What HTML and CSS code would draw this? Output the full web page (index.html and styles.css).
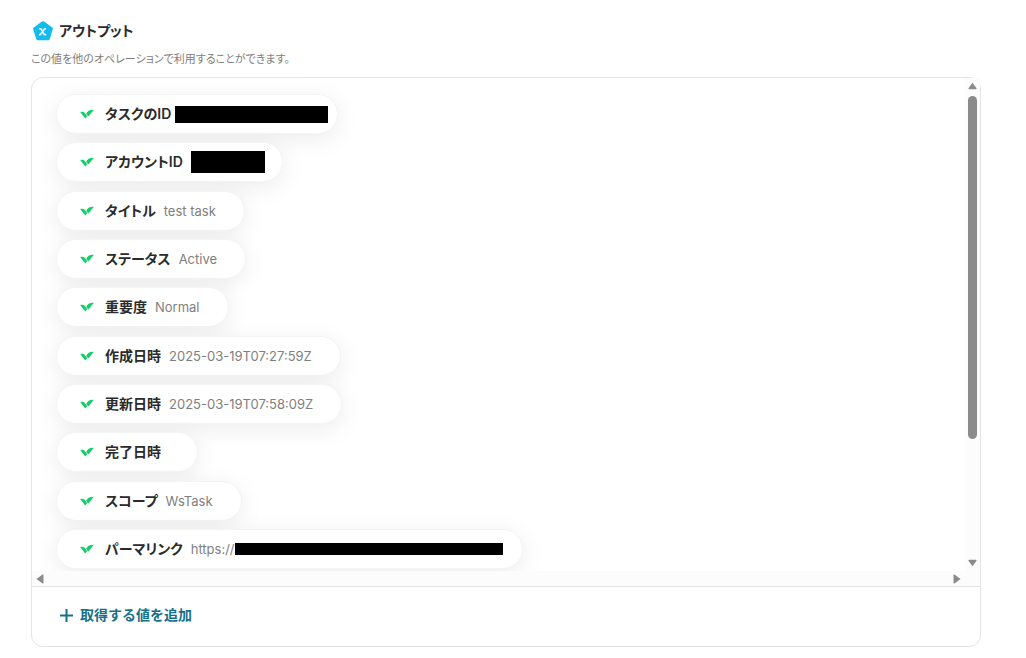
FILE: index.html
```html
<!DOCTYPE html>
<html lang="ja">
<head>
<meta charset="utf-8">
<meta name="viewport" content="width=device-width, initial-scale=1">
<title>アウトプット</title>
<link rel="stylesheet" href="styles.css">
</head>
<body>
<svg class="defs" aria-hidden="true">
  <symbol id="check" viewBox="0 0 14 10">
    <path d="M0.2 3.1C1.8 2.5 3.8 2.7 4.8 3.9L7.2 7.2L5.3 9.5Z"/>
    <path d="M6.2 5C7.2 2.2 9.8 0.6 13.8 0.8L8.9 7C8.4 7.6 7 6.2 6.2 5Z"/>
  </symbol>
</svg>
<main class="page">
  <header class="head">
    <svg class="logo" viewBox="0 0 20 20" aria-hidden="true">
      <path d="M8.9 0.6Q10 -0.1 11.1 0.6L19.2 6.4Q20.2 7.1 19.8 8.3L16.8 18Q16.4 19.2 15.1 19.2H4.9Q3.6 19.2 3.2 18L0.2 8.3Q-0.2 7.1 0.8 6.4Z" fill="#13bbee"/>
      <path d="M6.2 7.8H7.3Q8 7.8 8.5 8.6L10.6 12.6Q11.1 13.6 11.8 13.6H13.1M13.1 7.8H12.3Q11.7 7.8 11.1 8.6L7.9 12.8Q7.4 13.6 6.8 13.6H6" fill="none" stroke="#fff" stroke-width="1.6"/>
    </svg>
    <h1 class="title">アウトプット</h1>
  </header>
  <p class="lead">この値を他のオペレーションで利用することができます。</p>
  <section class="card">
    <div class="scroller">
      <ul class="list">
        <li class="chip"><svg class="check" aria-hidden="true"><use href="#check"/></svg><span class="label">タスクのID</span><span class="mask mask-id"></span></li>
        <li class="chip"><svg class="check" aria-hidden="true"><use href="#check"/></svg><span class="label">アカウントID</span><span class="mask mask-account"></span></li>
        <li class="chip"><svg class="check" aria-hidden="true"><use href="#check"/></svg><span class="label">タイトル</span><span class="value">test task</span></li>
        <li class="chip"><svg class="check" aria-hidden="true"><use href="#check"/></svg><span class="label">ステータス</span><span class="value">Active</span></li>
        <li class="chip"><svg class="check" aria-hidden="true"><use href="#check"/></svg><span class="label">重要度</span><span class="value">Normal</span></li>
        <li class="chip"><svg class="check" aria-hidden="true"><use href="#check"/></svg><span class="label">作成日時</span><span class="value">2025-03-19T07:27:59Z</span></li>
        <li class="chip"><svg class="check" aria-hidden="true"><use href="#check"/></svg><span class="label">更新日時</span><span class="value">2025-03-19T07:58:09Z</span></li>
        <li class="chip"><svg class="check" aria-hidden="true"><use href="#check"/></svg><span class="label">完了日時</span><span class="value"></span></li>
        <li class="chip"><svg class="check" aria-hidden="true"><use href="#check"/></svg><span class="label">スコープ</span><span class="value">WsTask</span></li>
        <li class="chip"><svg class="check" aria-hidden="true"><use href="#check"/></svg><span class="label">パーマリンク</span><span class="value link">https://<span class="mask mask-link"></span></span></li>
      </ul>
      <div class="track-y">
        <svg class="arrow" viewBox="0 0 10 8" aria-hidden="true"><path d="M5 0.5L9.5 6.5Q9.6 7.5 8.8 7.5H1.2Q0.4 7.5 0.5 6.5Z"/></svg>
        <div class="rail"><div class="thumb"></div></div>
        <svg class="arrow" viewBox="0 0 10 8" aria-hidden="true"><path d="M5 7.5L9.5 1.5Q9.6 0.5 8.8 0.5H1.2Q0.4 0.5 0.5 1.5Z"/></svg>
      </div>
      <div class="track-x">
        <svg class="arrow-side" viewBox="0 0 8 10" aria-hidden="true"><path d="M0.5 5L6.5 0.5Q7.5 0.4 7.5 1.2V8.8Q7.5 9.6 6.5 9.5Z"/></svg>
        <svg class="arrow-side" viewBox="0 0 8 10" aria-hidden="true"><path d="M7.5 5L1.5 0.5Q0.5 0.4 0.5 1.2V8.8Q0.5 9.6 1.5 9.5Z"/></svg>
      </div>
    </div>
    <footer class="foot">
      <button class="add" type="button">
        <svg class="plus" viewBox="0 0 13 13" aria-hidden="true"><path d="M6.5 0V13M0 6.5H13"/></svg>
        <span>取得する値を追加</span>
      </button>
    </footer>
  </section>
</main>
</body>
</html>
```
FILE: styles.css
```css
* { box-sizing: border-box; }
body {
  margin: 0;
  background: #fff;
  color: #2b2b2b;
  font-family: Inter, "Noto Sans CJK JP", sans-serif;
  font-feature-settings: "palt";
}
.defs { display: none; }
.page {
  display: flex;
  flex-direction: column;
  min-height: 100vh;
  padding: 21px 45px 11px 31px;
}
.head {
  display: flex;
  align-items: center;
  gap: 6px;
  height: 20px;
  padding-left: 2px;
}
.logo { width: 20px; height: 20px; }
.title { margin: 0; font-size: 14px; line-height: 20px; font-weight: 600; }
.lead {
  margin: 10px 0;
  font-size: 11px;
  line-height: 16px;
  color: #808080;
}
.card {
  flex: 1;
  display: flex;
  flex-direction: column;
  border: 1px solid #e4e4e4;
  border-radius: 12px;
}
.scroller {
  flex: 1;
  display: grid;
  grid-template-columns: minmax(0, 1fr) 15px;
  grid-template-rows: 1fr 15px;
}
.list {
  display: flex;
  flex-direction: column;
  align-items: flex-start;
  justify-content: space-between;
  gap: 8px;
  margin: 0;
  padding: 16px 24px 2px;
  list-style: none;
  overflow: hidden;
  border-top-left-radius: 11px;
}
.chip {
  display: flex;
  align-items: center;
  height: 40px;
  padding: 0 28px 0 23px;
  border: 1px solid #f4f4f4;
  border-radius: 20px;
  background: #fff;
  box-shadow: 0 5px 24px rgba(0, 0, 0, 0.08);
  white-space: nowrap;
}
.check { width: 14px; height: 10px; margin-right: 11px; fill: #13ce66; }
.label { margin-right: 8px; font-size: 14px; line-height: 20px; font-weight: 600; }
.value { font-size: 13px; line-height: 20px; color: #808080; }
.mask { background: #000; }
.mask-id { width: 153px; height: 17px; margin: 0 -19px 0 -4px; }
.mask-account { width: 74px; height: 22px; margin-right: -11px; }
.link { display: flex; align-items: center; }
.mask-link { width: 268px; height: 12px; margin-right: -9px; }
.track-y {
  display: flex;
  flex-direction: column;
  align-items: center;
  gap: 6px;
  padding: 4px 0;
  background: #fcfcfc;
}
.rail { flex: 1; }
.thumb { width: 9px; height: 75%; border-radius: 5px; background: #8b8b8b; }
.arrow { width: 9px; height: 8px; fill: #8b8b8b; }
.track-x {
  grid-column: 1 / -1;
  display: flex;
  align-items: center;
  justify-content: space-between;
  padding: 0 19px 0 4px;
  background: #fcfcfc;
}
.arrow-side { width: 8px; height: 10px; fill: #8b8b8b; }
.foot { padding: 18px 28px 21px; border-top: 1px solid #e4e4e4; }
.add {
  display: flex;
  align-items: center;
  gap: 7px;
  padding: 0;
  border: 0;
  background: none;
  color: #16708a;
  font: 600 14px/20px Inter, "Noto Sans CJK JP", sans-serif;
  cursor: pointer;
}
.plus { width: 13px; height: 13px; fill: none; stroke: currentColor; stroke-width: 2; }
```
